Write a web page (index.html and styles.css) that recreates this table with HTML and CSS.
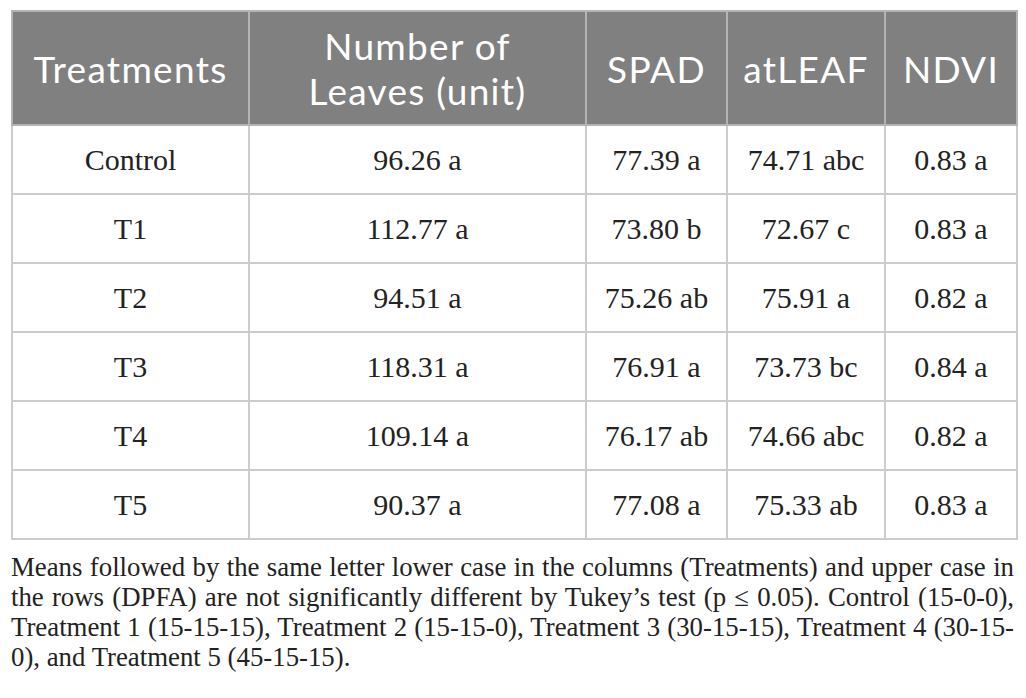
FILE: index.html
```html
<!DOCTYPE html>
<html lang="en">
<head>
<meta charset="utf-8">
<title>Table</title>
<link rel="stylesheet" href="styles.css">
</head>
<body>
<div class="page">
  <table class="data">
    <colgroup>
      <col class="c1"><col class="c2"><col class="c3"><col class="c4"><col class="c5">
    </colgroup>
    <thead>
      <tr>
        <th>Treatments</th>
        <th><span class="hl">Number of</span><span class="hl">Leaves (unit)</span></th>
        <th>SPAD</th>
        <th>atLEAF</th>
        <th>NDVI</th>
      </tr>
    </thead>
    <tbody>
      <tr><td>Control</td><td>96.26 a</td><td>77.39 a</td><td>74.71 abc</td><td>0.83 a</td></tr>
      <tr><td>T1</td><td>112.77 a</td><td>73.80 b</td><td>72.67 c</td><td>0.83 a</td></tr>
      <tr><td>T2</td><td>94.51 a</td><td>75.26 ab</td><td>75.91 a</td><td>0.82 a</td></tr>
      <tr><td>T3</td><td>118.31 a</td><td>76.91 a</td><td>73.73 bc</td><td>0.84 a</td></tr>
      <tr><td>T4</td><td>109.14 a</td><td>76.17 ab</td><td>74.66 abc</td><td>0.82 a</td></tr>
      <tr><td>T5</td><td>90.37 a</td><td>77.08 a</td><td>75.33 ab</td><td>0.83 a</td></tr>
    </tbody>
  </table>
  <p class="caption">Means followed by the same letter lower case in the columns (Treatments) and upper case in the rows (DPFA) are not significantly different by Tukey’s test (p ≤ 0.05). Control (15-0-0), Treatment 1 (15-15-15), Treatment 2 (15-15-0), Treatment 3 (30-15-15), Treatment 4 (30-15-0), and Treatment 5 (45-15-15).</p>
</div>
</body>
</html>
```

FILE: styles.css
```css
html, body {
  margin: 0;
  padding: 0;
  background: #ffffff;
}

.page {
  padding: 10px 0 0 11px;
  width: 1005px;
}

.data {
  border-collapse: collapse;
  width: 1005px;
  table-layout: fixed;
}

.c1 { width: 237px; }
.c2 { width: 337px; }
.c3 { width: 141px; }
.c4 { width: 158px; }
.c5 { width: 132px; }

.data th {
  background: #808080;
  color: #ffffff;
  font-family: Lato, "Open Sans", sans-serif;
  font-weight: 400;
  font-size: 37px;
  letter-spacing: 1.3px;
  line-height: 45px;
  height: 112px;
  padding: 0;
  border: 2px solid #b4b4b4;
  text-align: center;
  vertical-align: middle;
}

.hl {
  display: block;
  height: 45px;
  line-height: 45px;
}

.data td {
  font-family: "Liberation Serif", "Times New Roman", serif;
  font-size: 30px;
  color: #222222;
  height: 67px;
  padding: 0;
  border: 2px solid #cccccc;
  text-align: center;
  vertical-align: middle;
}

.caption {
  margin: 12px 0 0 0;
  width: 1003px;
  font-family: "Liberation Serif", "Times New Roman", serif;
  font-size: 26.8px;
  line-height: 30px;
  color: #222222;
  text-align: justify;
}
```
